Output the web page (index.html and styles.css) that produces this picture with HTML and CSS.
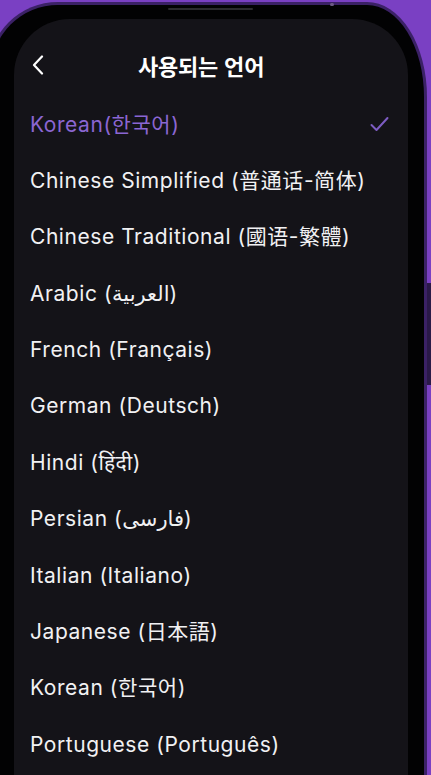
FILE: index.html
```html
<!DOCTYPE html>
<html lang="ko">
<head>
<meta charset="utf-8">
<title>사용되는 언어</title>
<link rel="stylesheet" href="styles.css">
</head>
<body>
<div class="phone">
  <div class="speaker"></div>
  <div class="cam-dot"></div>
  <div class="screen">
    <header class="nav">
      <svg class="back" width="12" height="20" viewBox="0 0 12 20"><polyline points="10,1.5 2,10 10,18.5" fill="none" stroke="#ffffff" stroke-width="2.2" stroke-linecap="round" stroke-linejoin="round"/></svg>
      <h1 class="title">사용되는 언어</h1>
    </header>
    <ul class="list">
      <li class="item selected"><span>Korean(한국어)</span><svg class="check" width="20" height="16" viewBox="0 0 20 16"><polyline points="2.5,9 7.5,14 18.5,2" fill="none" stroke="currentColor" stroke-width="2" stroke-linecap="round" stroke-linejoin="round"/></svg></li>
      <li class="item"><span>Chinese Simplified (普通话-简体)</span></li>
      <li class="item"><span>Chinese Traditional (國语-繁體)</span></li>
      <li class="item"><span>Arabic (العربية)</span></li>
      <li class="item"><span>French (Français)</span></li>
      <li class="item"><span>German (Deutsch)</span></li>
      <li class="item"><span>Hindi (हिंदी)</span></li>
      <li class="item"><span>Persian (فارسی)</span></li>
      <li class="item"><span>Italian (Italiano)</span></li>
      <li class="item"><span>Japanese (日本語)</span></li>
      <li class="item"><span>Korean (한국어)</span></li>
      <li class="item"><span>Portuguese (Português)</span></li>
    </ul>
  </div>
</div>
<div class="side-button"></div>
</body>
</html>
```

FILE: styles.css
```css
html, body {
  margin: 0;
  padding: 0;
}
body {
  background: #7a40c3;
  height: 775px;
  overflow: hidden;
  position: relative;
  font-family: Inter, "Noto Sans CJK KR", "Noto Sans", "DejaVu Sans", sans-serif;
}
.phone {
  position: relative;
  margin: 2px 0 0 -12px;
  width: 439px;
  height: 820px;
  box-sizing: border-box;
  border: 3px solid #3b2166;
  border-bottom: none;
  border-radius: 70px 60px 0 0 / 70px 95px 0 0;
  background: #020203;
  padding: 14px 16px 0 23px;
}
.speaker {
  position: absolute;
  top: 3px;
  left: 177px;
  width: 85px;
  height: 2px;
  background: #2b2b2e;
  border-radius: 1px;
}
.cam-dot {
  position: absolute;
  top: -2px;
  left: 339px;
  width: 4px;
  height: 3px;
  background: #6d5a86;
  border-radius: 2px;
}
.screen {
  background: #141318;
  height: 100%;
  border-radius: 56px 56px 0 0;
  color: #f1f1f3;
}
.nav {
  display: flex;
  align-items: center;
  height: 60px;
  padding: 16px 0 0 18px;
  gap: 94px;
}
.back {
  display: block;
  flex: none;
}
.title {
  margin: 0;
  font-family: "Noto Sans CJK KR", sans-serif;
  font-size: 22px;
  font-weight: 700;
  line-height: 1;
  color: #ffffff;
  letter-spacing: -0.2px;
}
.list {
  list-style: none;
  margin: 0;
  padding: 1px 0 0;
}
.item {
  height: 56.36px;
  display: flex;
  align-items: center;
  justify-content: space-between;
  padding: 0 19px 0 16px;
  font-size: 21px;
  letter-spacing: 0.55px;
  line-height: 1;
  color: #f1f1f3;
}
.item.selected {
  color: #8b66d2;
}
.check {
  display: block;
  color: #7d5cc2;
}
.side-button {
  position: absolute;
  top: 283px;
  left: 427px;
  width: 4px;
  height: 102px;
  background: #2a1948;
}
```
